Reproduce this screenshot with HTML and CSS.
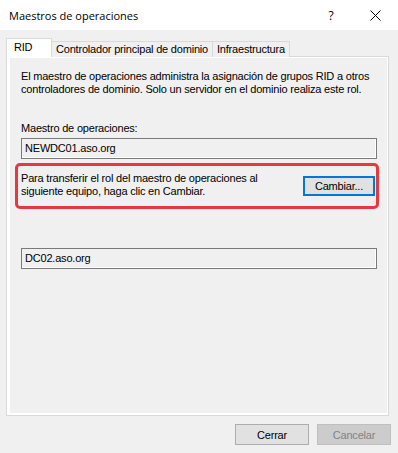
FILE: index.html
```html
<!DOCTYPE html>
<html lang="es">

<head>
    <meta charset="UTF-8">
    <meta name="viewport" content="width=device-width, initial-scale=1.0">
    <title>Maestros de operaciones</title>
    <link rel="stylesheet" href="styles.css">
</head>

<body>
    <div class="window">
        <div class="titlebar">
            <span class="title">Maestros de operaciones</span>
            <span class="tbtn help">?</span>
            <span class="tbtn close">
                <svg width="11" height="11" viewBox="0 0 11 11">
                    <path d="M0.5 0.5 L10.5 10.5 M10.5 0.5 L0.5 10.5" stroke="#000" stroke-width="1" fill="none" />
                </svg>
            </span>
        </div>

        <div class="tabs">
            <div class="tab active">RID</div>
            <div class="tab">Controlador principal de dominio</div>
            <div class="tab">Infraestructura</div>
        </div>

        <div class="panel">
            <div class="page">
                <p class="intro">El maestro de operaciones administra la asignación de grupos RID a otros
                    controladores de dominio. Solo un servidor en el dominio realiza este rol.</p>
                <div class="label">Maestro de operaciones:</div>
                <div class="field">NEWDC01.aso.org</div>
                <div class="highlight">
                    <span class="hint">Para transferir el rol del maestro de operaciones al siguiente equipo, haga clic en Cambiar.</span>
                    <button class="btn focus">Cambiar...</button>
                </div>
                <div class="field target">DC02.aso.org</div>
            </div>
        </div>

        <div class="footer">
            <button class="btn">Cerrar</button>
            <button class="btn" disabled>Cancelar</button>
        </div>
    </div>
</body>

</html>
```

FILE: styles.css
```css
body {
    margin: 0;
    padding: 0;
    background: #f0f0f0;
    font-family: "Liberation Sans", Arial, sans-serif;
    font-size: 11px;
    letter-spacing: -0.2px;
    color: #000;
}

.window {
    width: 398px;
    height: 453px;
    overflow: hidden;
}

.titlebar {
    height: 30px;
    background: #fff;
    display: flex;
    align-items: center;
}

.title {
    flex: 1;
    padding-left: 9px;
    font-family: "Open Sans", "Noto Sans", sans-serif;
    font-size: 11px;
    letter-spacing: 0;
}

.tbtn {
    width: 46px;
    height: 30px;
    display: flex;
    align-items: center;
    justify-content: center;
}

.help {
    font-family: "Open Sans", sans-serif;
    font-size: 12px;
    margin-right: -2px;
}

.tabs {
    display: flex;
    align-items: flex-end;
    padding: 8px 0 0 6px;
    height: 19px;
    position: relative;
    z-index: 1;
}

.tab {
    height: 16px;
    line-height: 15px;
    padding: 0 4px;
    border: 1px solid #d9d9d9;
    border-bottom: none;
    margin-left: -1px;
    background: #f0f0f0;
    box-sizing: border-box;
}

.tab.active {
    height: 19px;
    line-height: 17px;
    width: 46px;
    margin-left: 0;
    background: #fff;
    padding-left: 7px;
}

.panel {
    margin: -1px 9px 0 6px;
    height: 360px;
    border: 1px solid #d9d9d9;
    background: #fff;
    padding: 1px 1px 2px 3px;
    box-sizing: border-box;
}

.page {
    height: 100%;
    background: #f0f0f0;
    padding: 12px 10px 0 11px;
    box-sizing: border-box;
}

.intro {
    margin: 0;
    line-height: 13px;
}

.label {
    margin-top: 26px;
    line-height: 13px;
}

.field {
    margin-top: 3px;
    height: 21px;
    line-height: 19px;
    padding-left: 3px;
    border: 1px solid #7a7a7a;
    box-shadow: inset -1px -1px 0 #fff;
    box-sizing: border-box;
}

.target {
    margin-top: 39px;
}

.highlight {
    margin: 4px -2px 0 -6px;
    height: 46px;
    border: 3px solid #e5393f;
    border-radius: 5px;
    box-sizing: border-box;
    display: flex;
    align-items: flex-start;
    padding: 6px 1px 0 3px;
}

.hint {
    flex: 1;
    line-height: 13px;
    padding-right: 30px;
}

.btn {
    font-family: "Liberation Sans", Arial, sans-serif;
    font-size: 11px;
    letter-spacing: -0.2px;
    color: #000;
    background: #e1e1e1;
    border: 1px solid #adadad;
    height: 21px;
    width: 74px;
    padding: 0;
    margin: 0;
}

.btn.focus {
    margin-top: 4px;
    width: 72px;
    height: 20px;
    border: 2px solid #0078d7;
}

.btn:disabled {
    background: #cccccc;
    border-color: #bfbfbf;
    color: #838383;
}

.footer {
    display: flex;
    justify-content: flex-end;
    gap: 8px;
    margin-top: 8px;
    padding-right: 7px;
}
```
